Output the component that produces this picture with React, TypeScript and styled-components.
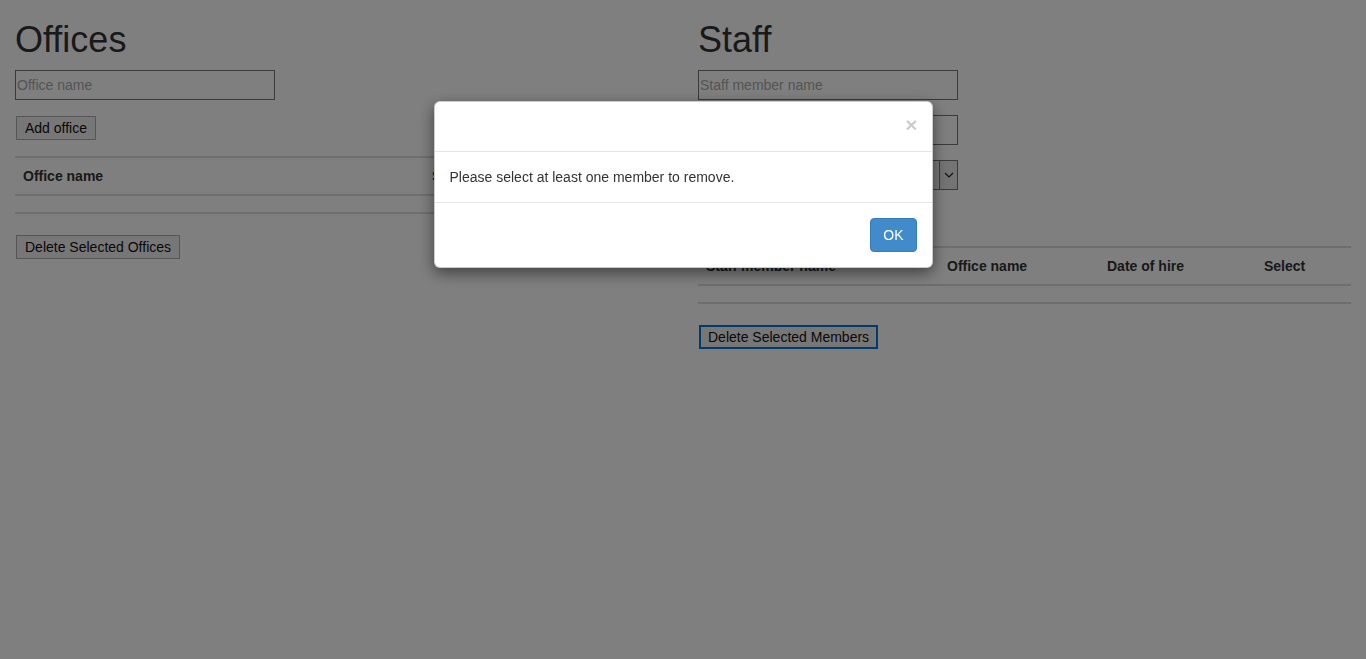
import React from "react";
import styled, { createGlobalStyle } from "styled-components";

const Global = createGlobalStyle`
  html, body { margin: 0; padding: 0; background: #fff; }
  body {
    font-family: "Liberation Sans", Arial, Helvetica, sans-serif;
    font-size: 14px;
    line-height: 20px;
    color: #333;
  }
  * { box-sizing: border-box; }
`;

const Page = styled.div`
  padding: 0 15px;
  display: grid;
  grid-template-columns: 1fr 1fr;
  column-gap: 30px;
`;

const Column = styled.section`
  display: flex;
  flex-direction: column;
  align-items: flex-start;
`;

const Title = styled.h1`
  font-size: 36px;
  font-weight: 500;
  line-height: 1.1;
  margin: 20px 0 10px;
  color: #333;
`;

const TextInput = styled.input`
  width: 260px;
  height: 30px;
  margin: 0 0 15px;
  padding: 0 1px;
  border: 1px solid #767676;
  background: #fff;
  font: inherit;
  font-size: 14px;
  color: #333;
  outline: none;
  &::placeholder { color: #a8a8a8; }
`;

const SelectBox = styled.div`
  width: 260px;
  height: 30px;
  margin: 0 0 15px;
  display: flex;
  border: 1px solid #767676;
  background: #efefef;
`;

const SelectValue = styled.div`
  flex: 1;
`;

const SelectArrow = styled.div`
  width: 18px;
  border-left: 1px solid #767676;
  background: #e8e8e8;
  display: flex;
  align-items: center;
  justify-content: center;
`;

const Button = styled.button<{ $focused?: boolean }>`
  height: 24px;
  margin: 1px 1px 0;
  padding: 0 ${(p) => (p.$focused ? 7 : 8)}px;
  border: ${(p) => (p.$focused ? "2px solid #0078d7" : "1px solid #adadad")};
  background: #efefef;
  color: #111;
  font-family: "Liberation Sans", Arial, sans-serif;
  font-size: 14px;
  line-height: 20px;
  border-radius: 0;
  cursor: pointer;
`;

const Table = styled.table`
  width: 100%;
  border-collapse: collapse;
  margin: 16px 0 20px;
`;

const Th = styled.th<{ $w?: number }>`
  width: ${(p) => (p.$w ? `${p.$w}px` : "auto")};
  text-align: left;
  font-weight: 700;
  padding: 8px;
  line-height: 20px;
  border-top: 2px solid #ddd;
  border-bottom: 2px solid #ddd;
  color: #333;
`;

const Td = styled.td`
  height: 18px;
  padding: 0;
  border-bottom: 2px solid #ddd;
`;

const Backdrop = styled.div`
  position: fixed;
  inset: 0;
  background: rgba(0, 0, 0, 0.5);
  display: flex;
  justify-content: center;
  align-items: flex-start;
  padding-top: 101px;
`;

const Dialog = styled.div`
  width: 499px;
  background: #fff;
  border: 1px solid rgba(0, 0, 0, 0.2);
  border-radius: 6px;
  box-shadow: 0 5px 15px rgba(0, 0, 0, 0.5);
`;

const DialogHeader = styled.div`
  padding: 15px;
  border-bottom: 1px solid #e5e5e5;
  display: flex;
  justify-content: flex-end;
`;

const Close = styled.button`
  border: 0;
  background: transparent;
  padding: 0;
  margin: -4px -1px 0 0;
  height: 23px;
  font-family: "Liberation Sans", Arial, sans-serif;
  font-size: 21px;
  font-weight: 700;
  line-height: 1;
  color: #000;
  opacity: 0.2;
  cursor: pointer;
`;

const DialogBody = styled.div`
  padding: 15px;
  line-height: 20px;
  color: #333;
`;

const DialogFooter = styled.div`
  padding: 15px;
  border-top: 1px solid #e5e5e5;
  display: flex;
  justify-content: flex-end;
`;

const PrimaryButton = styled.button`
  height: 34px;
  padding: 6px 12px;
  border: 1px solid #357ebd;
  border-radius: 4px;
  background: #428bca;
  color: #fff;
  font-family: "Liberation Sans", Arial, sans-serif;
  font-size: 14px;
  line-height: 20px;
  cursor: pointer;
`;

function Chevron() {
  return (
    <svg width="10" height="6" viewBox="0 0 10 6">
      <polyline points="1,1 5,5 9,1" fill="none" stroke="#222" strokeWidth="1.2" />
    </svg>
  );
}

export default function App() {
  return (
    <>
      <Global />
      <Page>
        <Column>
          <Title>Offices</Title>
          <TextInput placeholder="Office name" />
          <Button>Add office</Button>
          <Table>
            <thead>
              <tr>
                <Th $w={409}>Office name</Th>
                <Th>Select</Th>
              </tr>
            </thead>
            <tbody>
              <tr>
                <Td />
                <Td />
              </tr>
            </tbody>
          </Table>
          <Button>Delete Selected Offices</Button>
        </Column>
        <Column>
          <Title>Staff</Title>
          <TextInput placeholder="Staff member name" />
          <TextInput />
          <SelectBox>
            <SelectValue />
            <SelectArrow>
              <Chevron />
            </SelectArrow>
          </SelectBox>
          <Button>Add member</Button>
          <Table>
            <thead>
              <tr>
                <Th $w={241}>Staff member name</Th>
                <Th $w={160}>Office name</Th>
                <Th $w={157}>Date of hire</Th>
                <Th>Select</Th>
              </tr>
            </thead>
            <tbody>
              <tr>
                <Td />
                <Td />
                <Td />
                <Td />
              </tr>
            </tbody>
          </Table>
          <Button $focused>Delete Selected Members</Button>
        </Column>
      </Page>
      <Backdrop>
        <Dialog role="dialog">
          <DialogHeader>
            <Close aria-label="Close">×</Close>
          </DialogHeader>
          <DialogBody>Please select at least one member to remove.</DialogBody>
          <DialogFooter>
            <PrimaryButton>OK</PrimaryButton>
          </DialogFooter>
        </Dialog>
      </Backdrop>
    </>
  );
}
